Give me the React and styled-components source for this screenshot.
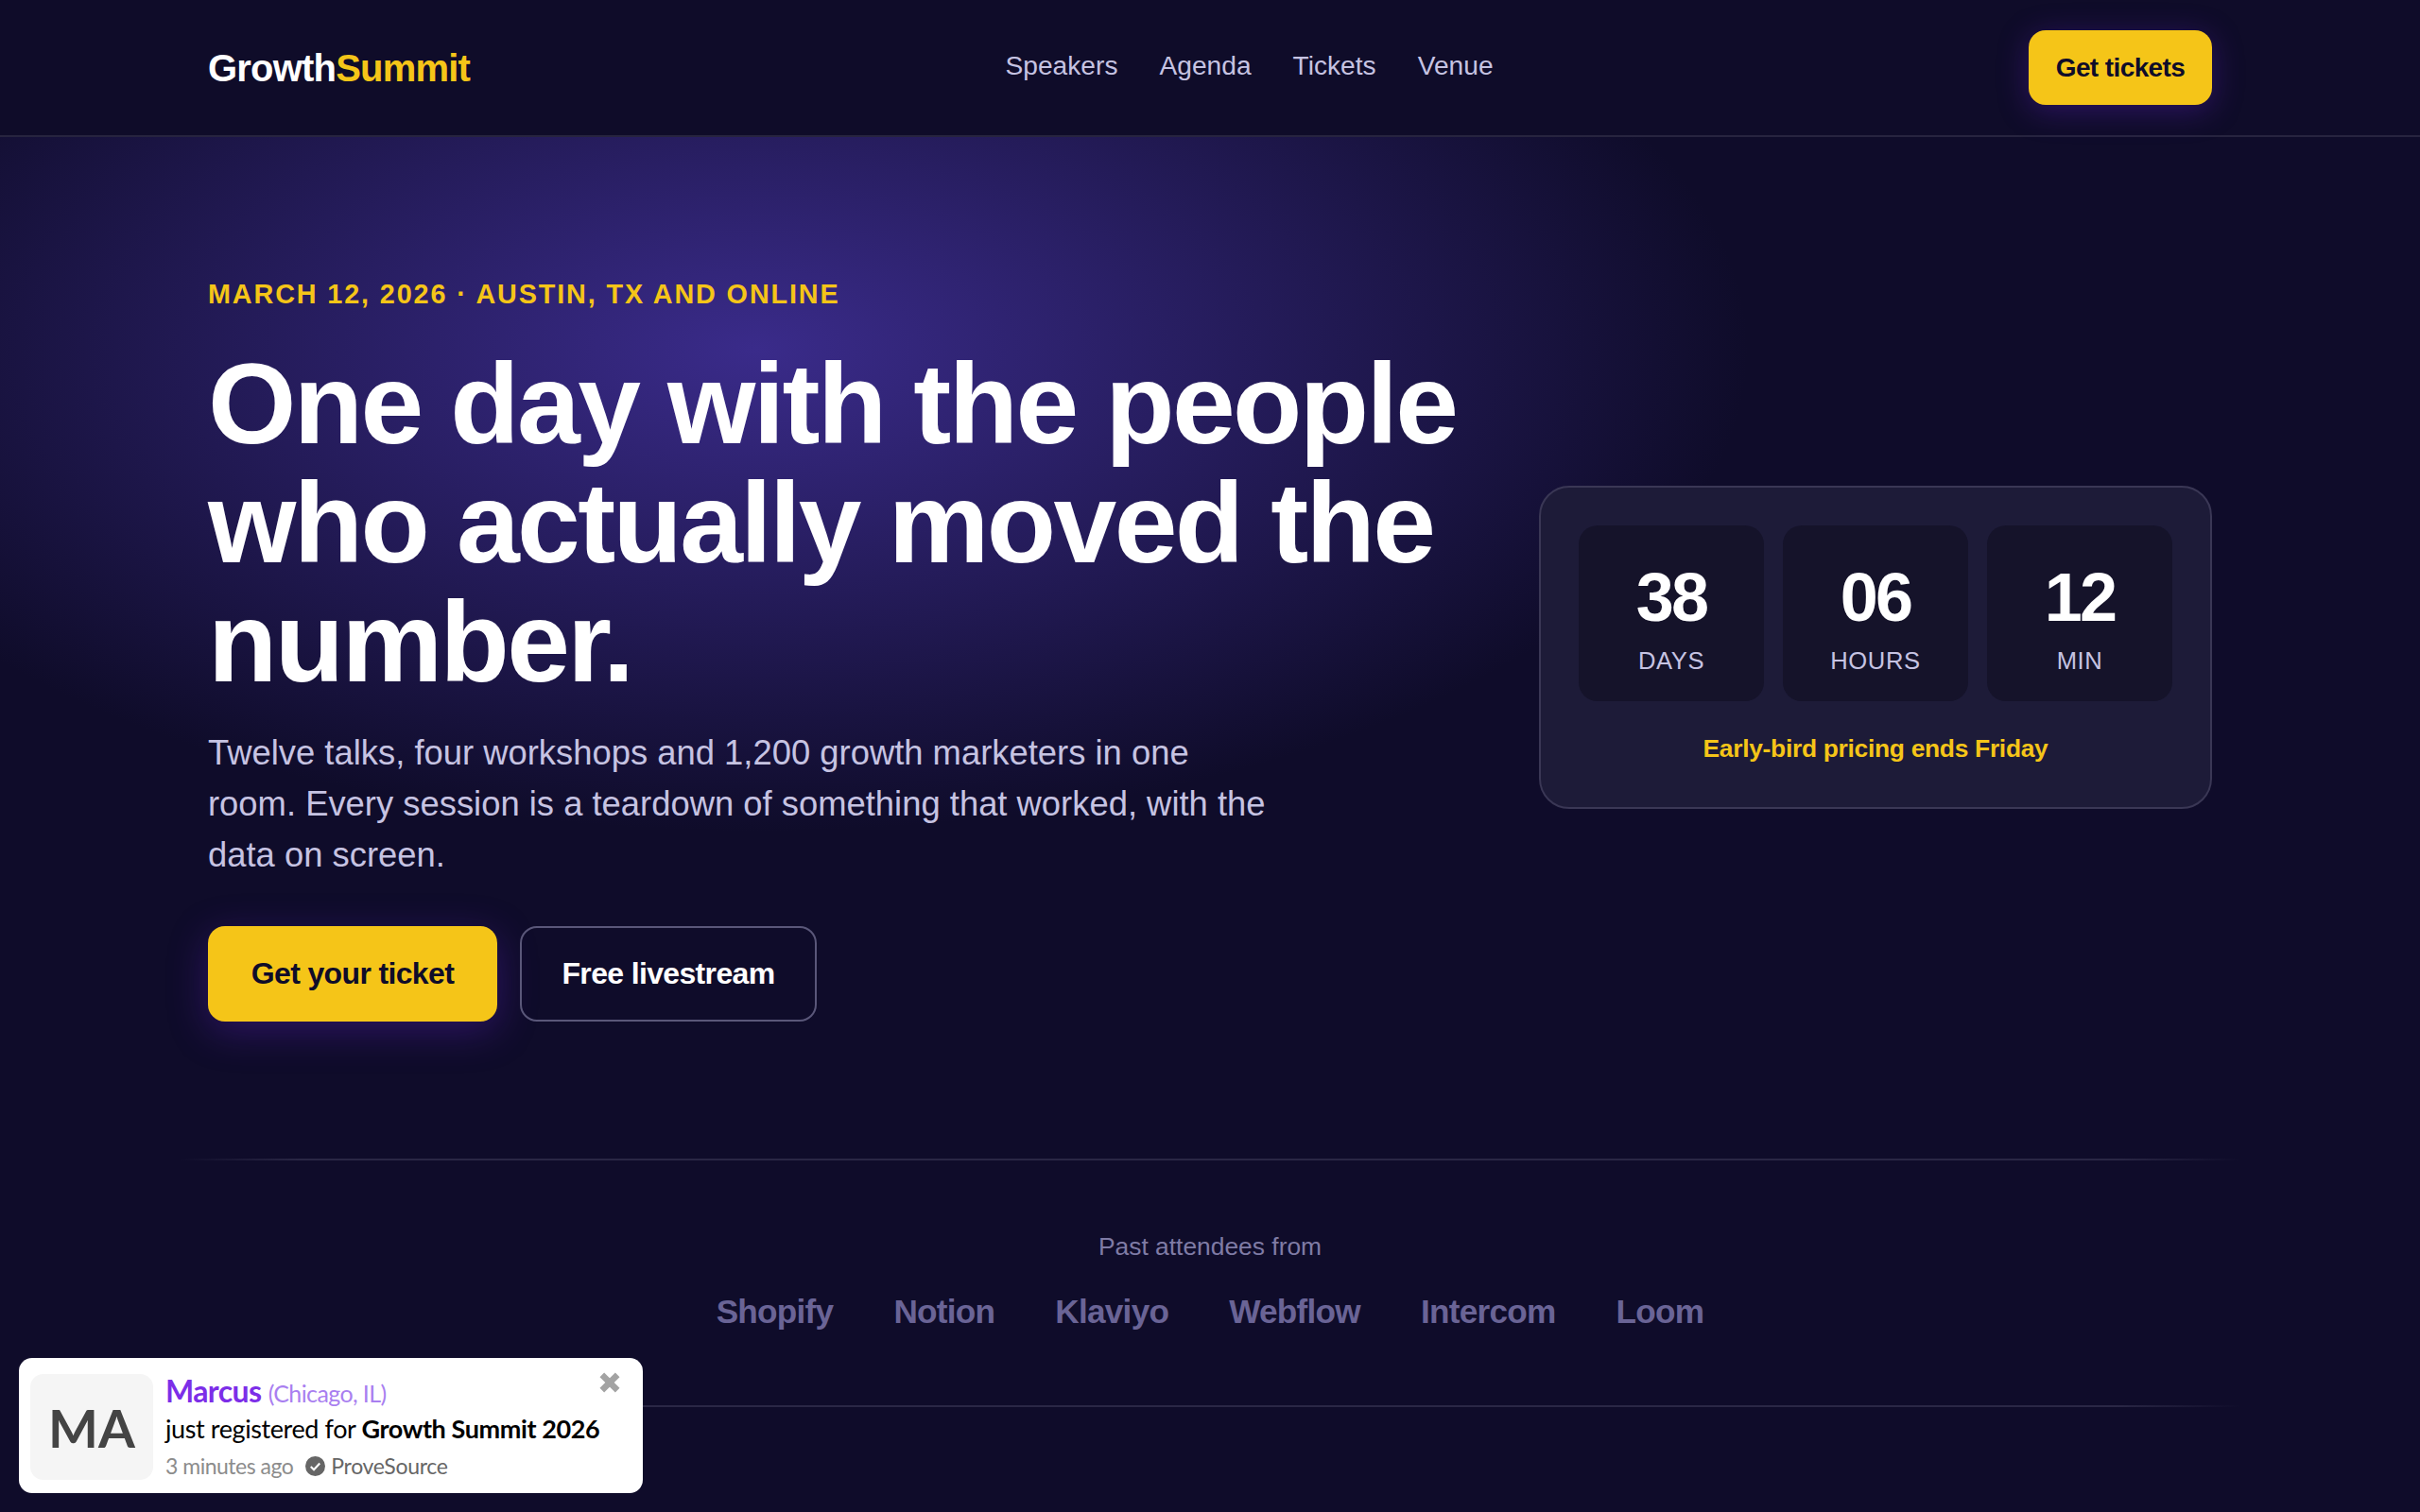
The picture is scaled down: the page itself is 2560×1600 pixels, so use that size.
import styled, { createGlobalStyle } from 'styled-components'

const GlobalStyle = createGlobalStyle`
    * {
        box-sizing: border-box;
    }
    body {
        margin: 0;
        background: #0f0c2a;
        font-family: "Liberation Sans", Arial, sans-serif;
    }
`

const links = ['Speakers', 'Agenda', 'Tickets', 'Venue']
const counters = [
    { value: '38', label: 'Days' },
    { value: '06', label: 'Hours' },
    { value: '12', label: 'Min' },
]
const brands = ['Shopify', 'Notion', 'Klaviyo', 'Webflow', 'Intercom', 'Loom']

const App = () => {
    return (
        <Page>
            <GlobalStyle />
            <Nav>
                <Logo>
                    Growth<span>Summit</span>
                </Logo>
                <NavLinks>
                    {links.map((link) => (
                        <NavLink key={link}>{link}</NavLink>
                    ))}
                </NavLinks>
                <NavButton>Get tickets</NavButton>
            </Nav>
            <Hero>
                <HeroText>
                    <Eyebrow>March 12, 2026 · Austin, TX and online</Eyebrow>
                    <Title>One day with the people who actually moved the number.</Title>
                    <Lead>
                        Twelve talks, four workshops and 1,200 growth marketers in one room. Every session is a
                        teardown of something that worked, with the data on screen.
                    </Lead>
                    <Actions>
                        <PrimaryButton>Get your ticket</PrimaryButton>
                        <GhostButton>Free livestream</GhostButton>
                    </Actions>
                </HeroText>
                <CountCard>
                    <Tiles>
                        {counters.map((item) => (
                            <Tile key={item.label}>
                                <TileValue>{item.value}</TileValue>
                                <TileLabel>{item.label}</TileLabel>
                            </Tile>
                        ))}
                    </Tiles>
                    <CardNote>Early-bird pricing ends Friday</CardNote>
                </CountCard>
            </Hero>
            <Divider />
            <Proof>
                <ProofTitle>Past attendees from</ProofTitle>
                <Brands>
                    {brands.map((brand) => (
                        <Brand key={brand}>{brand}</Brand>
                    ))}
                </Brands>
            </Proof>
            <Divider />
            <Toast>
                <Avatar>MA</Avatar>
                <ToastBody>
                    <ToastName>
                        Marcus <small>(Chicago, IL)</small>
                    </ToastName>
                    <ToastLine>
                        just registered for <strong>Growth Summit 2026</strong>
                    </ToastLine>
                    <ToastMeta>
                        <TimeAgo>3 minutes ago</TimeAgo>
                        <Verified>
                            <svg width="21" height="21" viewBox="0 0 20 20">
                                <circle cx="10" cy="10" r="10" fill="#666" />
                                <path d="M5.5 10.4l3.1 3.1 5.9-6.4" fill="none" stroke="#fff" strokeWidth="2" />
                            </svg>
                            ProveSource
                        </Verified>
                    </ToastMeta>
                </ToastBody>
                <CloseIcon width="24" height="24" viewBox="0 0 22 22">
                    <path d="M3.5 3.5l15 15M18.5 3.5l-15 15" stroke="#a3a3a3" strokeWidth="6" />
                </CloseIcon>
            </Toast>
        </Page>
    )
}

const Page = styled.div`
    position: relative;
    min-height: 1600px;
    overflow: hidden;
    background: #0f0c2a;
`

const Nav = styled.nav`
    height: 145px;
    padding: 0 220px;
    display: flex;
    justify-content: space-between;
    align-items: center;
    background: #0f0c29;
    border-bottom: 2px solid #27243f;
`

const Logo = styled.div`
    padding-top: 2px;
    font-size: 40px;
    font-weight: 700;
    letter-spacing: -0.8px;
    color: #fff;

    span {
        color: #f5c518;
    }
`

const NavLinks = styled.div`
    padding-bottom: 3px;
    display: flex;
    gap: 44px;
`

const NavLink = styled.a`
    font-size: 28.16px;
    color: #c6c3e2;
`

const NavButton = styled.button`
    width: 194px;
    height: 79px;
    padding: 0;
    border: 0;
    border-radius: 18px;
    background: #f5c518;
    color: #0f0c29;
    font: 700 28px "Liberation Sans", Arial, sans-serif;
    letter-spacing: -0.6px;
    box-shadow: 0 6px 32px rgba(91, 33, 182, 0.4);
`

const Hero = styled.section`
    padding: 150px 220px 145px;
    display: grid;
    grid-template-columns: 1fr 712px;
    gap: 64px;
    align-items: center;
    background: radial-gradient(ellipse 1050px 510px at 800px 225px, #3a2b8a 0%, rgba(15, 12, 42, 0) 100%);
`

const HeroText = styled.div`
    min-width: 0;
`

const Eyebrow = styled.div`
    font-size: 28.8px;
    font-weight: 700;
    line-height: 33px;
    letter-spacing: 1.86px;
    text-transform: uppercase;
    color: #f5c518;
`

const Title = styled.h1`
    margin: 36px 0 28px;
    font-size: 120px;
    line-height: 126px;
    font-weight: 700;
    letter-spacing: -2.6px;
    color: #fff;
`

const Lead = styled.p`
    margin: 0 0 48px;
    max-width: 1130px;
    font-size: 36.4px;
    line-height: 54px;
    color: #c6c3e2;
`

const Actions = styled.div`
    display: flex;
    gap: 24px;
`

const PrimaryButton = styled.button`
    width: 306px;
    height: 101px;
    padding: 0;
    border: 0;
    border-radius: 18px;
    background: #f5c518;
    color: #0f0c29;
    font: 700 32px "Liberation Sans", Arial, sans-serif;
    letter-spacing: -0.65px;
    box-shadow: 0 10px 40px rgba(91, 33, 182, 0.4);
`

const GhostButton = styled.button`
    width: 314px;
    height: 101px;
    padding: 0;
    border: 2px solid #5a5779;
    border-radius: 18px;
    background: transparent;
    color: #fff;
    font: 700 32px "Liberation Sans", Arial, sans-serif;
    letter-spacing: -0.65px;
`

const CountCard = styled.div`
    height: 342px;
    margin-bottom: 6px;
    padding: 40px;
    border: 2px solid #3a3755;
    border-radius: 32px;
    background: #1d1b38;
`

const Tiles = styled.div`
    display: grid;
    grid-template-columns: repeat(3, 1fr);
    gap: 20px;
`

const Tile = styled.div`
    height: 186px;
    padding-top: 40px;
    border-radius: 20px;
    background: #15132a;
    text-align: center;
`

const TileValue = styled.div`
    font-size: 72px;
    line-height: 72px;
    font-weight: 700;
    letter-spacing: -2.9px;
    color: #fff;
`

const TileLabel = styled.div`
    margin-top: 16px;
    font-size: 25.6px;
    line-height: 30px;
    letter-spacing: 0.6px;
    text-transform: uppercase;
    color: #c6c3e2;
`

const CardNote = styled.div`
    margin-top: 34px;
    font-size: 26.4px;
    line-height: 32px;
    font-weight: 700;
    letter-spacing: -0.3px;
    text-align: center;
    color: #f5c518;
`

const Divider = styled.div`
    height: 2px;
    margin: 0 190px;
    background: linear-gradient(90deg, rgba(46, 43, 72, 0), #2a2745 6%, #2a2745 94%, rgba(46, 43, 72, 0));
`

const Proof = styled.section`
    height: 259px;
    padding-top: 76px;
    text-align: center;
`

const ProofTitle = styled.div`
    font-size: 26.4px;
    line-height: 30px;
    color: #7f7ba5;
`

const Brands = styled.div`
    margin-top: 34px;
    display: flex;
    justify-content: center;
    gap: 64px;
`

const Brand = styled.div`
    font-size: 35.2px;
    line-height: 40px;
    font-weight: 700;
    letter-spacing: -0.75px;
    color: #6a6496;
`

const Toast = styled.div`
    position: absolute;
    left: 20px;
    top: 1437px;
    width: 660px;
    height: 143px;
    padding: 17px 12px;
    display: flex;
    gap: 13px;
    background: #fff;
    border-radius: 14px;
    font-family: Lato, sans-serif;
`

const Avatar = styled.div`
    width: 130px;
    height: 112px;
    flex: none;
    display: flex;
    align-items: center;
    justify-content: center;
    border-radius: 14px;
    background: #f5f5f5;
    color: #444;
    font-size: 56px;
    font-weight: 700;
`

const ToastBody = styled.div`
    min-width: 0;
    margin-top: -1px;
`

const ToastName = styled.div`
    font-size: 32px;
    line-height: 38px;
    font-weight: 700;
    letter-spacing: -0.6px;
    color: #7c2ee8;

    small {
        font-size: 25px;
        font-weight: 400;
        color: #a97ff0;
    }
`

const ToastLine = styled.div`
    font-size: 27px;
    line-height: 37px;
    letter-spacing: -0.4px;
    color: #000;

    strong {
        font-weight: 700;
    }
`

const ToastMeta = styled.div`
    margin-top: 5px;
    display: flex;
    align-items: center;
    gap: 13px;
    font-size: 23px;
    line-height: 32px;
    letter-spacing: -0.3px;
    color: #8c8c8c;
`

const TimeAgo = styled.span`
    letter-spacing: -0.5px;
`

const Verified = styled.span`
    display: flex;
    align-items: center;
    gap: 6px;
    color: #666;
`

const CloseIcon = styled.svg`
    position: absolute;
    top: 14px;
    right: 23px;
`

export default App
